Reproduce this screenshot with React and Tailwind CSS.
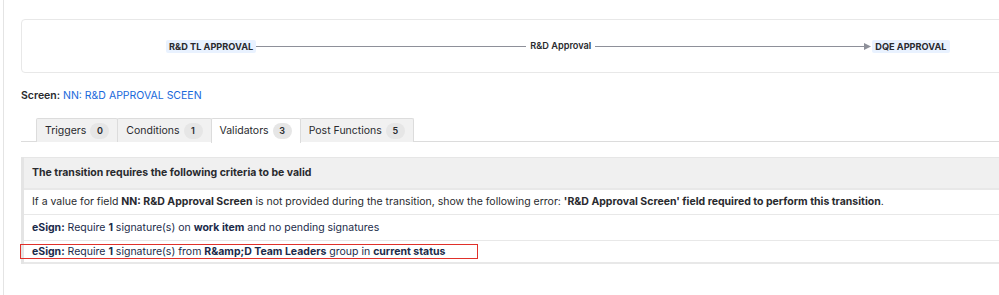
import React from 'react';

const tabs = [
    { label: 'Triggers', count: 0 },
    { label: 'Conditions', count: 1 },
    { label: 'Validators', count: 3, active: true },
    { label: 'Post Functions', count: 5 },
];

const StatusLozenge = ({ children }) => (
    <span className="bg-[#e9f2ff] text-[#292a2e] text-[9.2px] font-bold leading-[13px] px-[3px] rounded-[2px] whitespace-nowrap">
        {children}
    </span>
);

const App = () => {
    return (
        <div className="w-[999px] h-[295px] overflow-hidden bg-white text-[#292a2e] font-['Inter',sans-serif]">
            <div className="ml-[3px] h-full border-l border-[#e4e4e4] pl-[17px] pt-[19px]">
                {/* Workflow transition diagram */}
                <div className="w-[1100px] h-[54px] border border-[#e8e8e8] rounded-[4px] flex items-center pl-[144px]">
                    <StatusLozenge>R&amp;D TL APPROVAL</StatusLozenge>
                    <div className="w-[270px] h-px bg-[#8e9099]" />
                    <span className="px-[4px] text-[9.2px] font-semibold whitespace-nowrap">R&amp;D Approval</span>
                    <div className="w-[270px] h-px bg-[#8e9099]" />
                    <svg width="7" height="7" viewBox="0 0 7 7" className="-ml-px mr-px">
                        <path d="M0 0 L7 3.5 L0 7 Z" fill="#8e9099" />
                    </svg>
                    <StatusLozenge>DQE APPROVAL</StatusLozenge>
                </div>

                {/* Screen */}
                <div className="mt-[16px] text-[10.5px] leading-[14px]">
                    <span className="font-semibold">Screen:</span>{' '}
                    <span className="text-[#1868db]">NN: R&amp;D APPROVAL SCEEN</span>
                </div>

                {/* Tabs */}
                <div className="mt-[15px] flex border-b border-[#dcdcdc] pl-[15px] h-[24px]">
                    {tabs.map((t) => (
                        <div
                            key={t.label}
                            className={`flex items-center gap-[4px] px-[8px] border border-b-0 border-[#dcdcdc] -ml-px first:ml-0 rounded-t-[2px] text-[10.5px] ${t.active ? 'bg-white h-[25px]' : 'bg-[#f1f1f1] h-[24px]'}`}
                        >
                            <span>{t.label}</span>
                            <span className="bg-[#e6e6e6] rounded-full text-[9px] font-semibold w-[19px] h-[16px] flex items-center justify-center">
                                {t.count}
                            </span>
                        </div>
                    ))}
                </div>

                {/* Validators table */}
                <div className="mt-[15px] w-[1100px] border-l-[3px] border-[#e4e4e4] text-[10.5px] leading-[14px]">
                    <div className="h-[31px] bg-[#f0f0f0] border-t border-[#e6e6e6] flex items-center pl-[8px] font-bold">
                        The transition requires the following criteria to be valid
                    </div>
                    <div className="h-[26px] border-t-[2px] border-[#e8e8e8] flex items-center pl-[8px] whitespace-nowrap">
                        <span>
                            If a value for field <b>NN: R&amp;D Approval Screen</b> is not provided during the transition, show the following error:{' '}
                            <b>'R&amp;D Approval Screen' field required to perform this transition</b>.
                        </span>
                    </div>
                    <div className="h-[26px] border-t border-[#e8e8e8] flex items-center pl-[8px] text-[#1c2b4a]">
                        <span>
                            <b>eSign:</b> Require <b>1</b> signature(s) on <b>work item</b> and no pending signatures
                        </span>
                    </div>
                    <div className="h-[24px] border-t border-b-[2px] border-[#e8e8e8] flex items-center text-[#1c2b4a]">
                        <span className="-ml-[4px] pl-[11px] pr-[32px] border-[1.5px] border-[#e0302a] leading-[13px]">
                            <b>eSign:</b> Require <b>1</b> signature(s) from <b>R&amp;amp;D Team Leaders</b> group in <b>current status</b>
                        </span>
                    </div>
                </div>
            </div>
        </div>
    );
};

export default App;
